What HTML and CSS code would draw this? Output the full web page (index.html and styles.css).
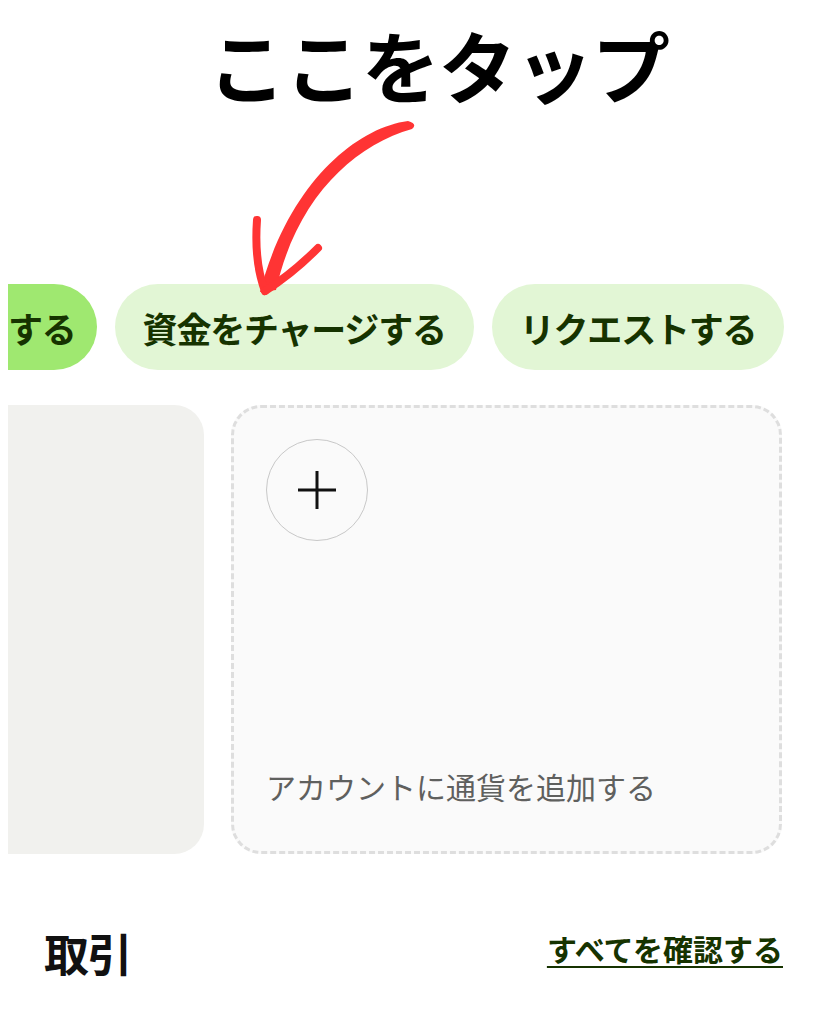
FILE: index.html
```html
<!DOCTYPE html>
<html lang="ja">
<head>
  <meta charset="UTF-8">
  <title>ここをタップ</title>
  <link rel="stylesheet" href="styles.css">
</head>
<body>
  <div class="page">
    <h1 class="title">ここをタップ</h1>

    <svg class="arrow" width="819" height="300" viewBox="0 0 819 300">
      <path d="M408 121 C 355 128, 288 185, 260 292 L 276 290 C 296 200, 352 146, 412 129 Q 418 124 408 121 Z" fill="#ff3434"/>
      <path d="M257 220 Q 254 262 265 291" fill="none" stroke="#ff3434" stroke-width="8" stroke-linecap="round"/>
      <path d="M318 248 Q 292 274 265 291" fill="none" stroke="#ff3434" stroke-width="8" stroke-linecap="round"/>
    </svg>

    <div class="pill-row">
      <button class="pill pill-primary">する</button>
      <button class="pill">資金をチャージする</button>
      <button class="pill">リクエストする</button>
    </div>

    <div class="card-row">
      <div class="card card-balance"></div>
      <div class="card card-add">
        <div class="add-circle">
          <svg width="40" height="40" viewBox="0 0 40 40">
            <path d="M20 1 V39 M1 20 H39" stroke="#111" stroke-width="3"/>
          </svg>
        </div>
        <p class="add-label">アカウントに通貨を追加する</p>
      </div>
    </div>

    <div class="section-head">
      <h2>取引</h2>
      <a href="#" class="see-all">すべてを確認する</a>
    </div>
  </div>
</body>
</html>
```

FILE: styles.css
```css
body {
  margin: 0;
  background-color: #ffffff;
  font-family: "Noto Sans CJK JP", "Noto Sans", sans-serif;
  color: #0e0f0c;
}

.page {
  position: relative;
  width: 819px;
  height: 1024px;
  overflow: hidden;
}

.title {
  margin: 25px 0 0;
  padding-left: 58px;
  text-align: center;
  font-size: 78px;
  line-height: 78px;
  font-weight: 700;
  letter-spacing: -1.2px;
  color: #000;
}

.arrow {
  position: absolute;
  top: 0;
  left: 0;
  pointer-events: none;
  z-index: 2;
}

.pill-row {
  display: flex;
  gap: 18px;
  margin: 181px 0 0 8px;
}

.pill {
  flex: none;
  height: 86px;
  padding: 0 28px;
  border: none;
  border-radius: 43px;
  background-color: #e2f6d5;
  color: #163300;
  font-family: inherit;
  font-size: 35px;
  font-weight: 700;
  letter-spacing: -1.2px;
}

.pill-primary {
  padding: 0 21px 0 0;
  border-radius: 0 43px 43px 0;
  background-color: #9fe870;
}

.card-row {
  display: flex;
  gap: 27px;
  margin: 35px 37px 0 8px;
}

.card {
  box-sizing: border-box;
  height: 449px;
  border-radius: 30px;
}

.card-balance {
  flex: none;
  width: 196px;
  border-radius: 0 30px 30px 0;
  background-color: #f1f1ee;
}

.card-add {
  flex: 1;
  display: flex;
  flex-direction: column;
  justify-content: space-between;
  padding: 31px 32px 47px;
  background-color: #fafafa;
  border: 3px dashed #dedede;
}

.add-circle {
  display: flex;
  align-items: center;
  justify-content: center;
  box-sizing: border-box;
  width: 102px;
  height: 102px;
  border: 1.5px solid #c8c8c8;
  border-radius: 50%;
}

.add-label {
  margin: 0;
  font-size: 30px;
  line-height: 36px;
  color: #5f605e;
}

.section-head {
  display: flex;
  justify-content: space-between;
  align-items: center;
  margin-top: 72px;
  padding: 0 36px 0 44px;
}

.section-head h2 {
  margin: 0;
  font-size: 45px;
  line-height: 54px;
  font-weight: 700;
  letter-spacing: -1.5px;
  color: #111;
}

.see-all {
  margin-bottom: 10px;
  font-size: 30px;
  font-weight: 700;
  color: #163300;
  text-decoration: underline;
  text-decoration-thickness: 2px;
  text-underline-offset: 5px;
}
```
